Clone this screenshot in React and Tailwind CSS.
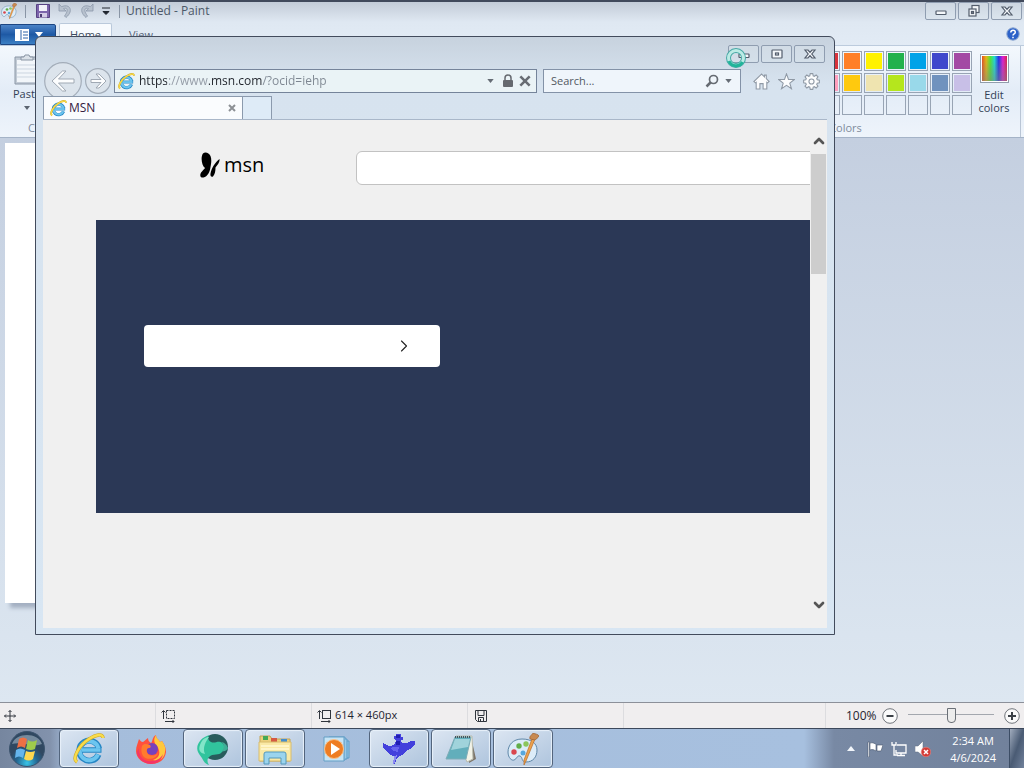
import React from 'react';
import { ChevronDown, ChevronRight, ChevronUp } from 'lucide-react';

const swatches = [
  ['#000000', '#7f7f7f', '#880015', '#d8333c', '#ff7f27', '#fff200', '#22b14c', '#00a2e8', '#3f48cc', '#a349a4'],
  ['#ffffff', '#c3c3c3', '#b97a57', '#ff9fbd', '#ffc90e', '#efe4b0', '#b5e61d', '#99d9ea', '#7092be', '#c8bfe7'],
  Array(10).fill(null),
];

function IeIcon({ className }) {
  return (
    <svg viewBox="0 0 32 32" className={className} fill="none">
      <path d="M25.5 21.5A10 10 0 1 1 26 15.5" stroke="#2586c4" strokeWidth="6" />
      <path d="M8 17H28.5" stroke="#2586c4" strokeWidth="5.5" />
      <path d="M25 21.5A9.5 9.5 0 1 1 25.5 15.5" stroke="#6cc5ef" strokeWidth="4" />
      <path d="M9 17H27.5" stroke="#6cc5ef" strokeWidth="3.5" />
      <path d="M4 29C-1 26 5 13 16 6C23 1.5 30 0 30 5" stroke="#c9a52a" strokeWidth="3.5" />
      <path d="M4 29C-1 26 5 13 16 6C23 1.5 30 0 30 5" stroke="#f9dc4a" strokeWidth="2.4" />
    </svg>
  );
}

function PaletteIcon({ className }) {
  return (
    <svg viewBox="0 0 32 32" className={className}>
      <path d="M15 6C6 6 1 12 1 19c0 6 4 9 6 8 3-1 3-5 6-4 3 1 1 6 6 6 7 0 11-5 11-12C30 10 24 6 15 6Z" fill="#dcecf8" stroke="#5f87a8" />
      <circle cx="7" cy="19" r="2.7" fill="#d9474e" />
      <circle cx="12" cy="13" r="2.7" fill="#61ad49" />
      <circle cx="19" cy="11" r="2.7" fill="#8bc65b" />
      <circle cx="16" cy="20" r="2.5" fill="#57a7dc" />
      <path d="M28 6L19 28l-2 4 0-5L25 6Z" fill="#eda24c" stroke="#b66b2a" strokeWidth="0.7" />
      <path d="M23 6C22 3 25 2 26 0c2 1 5 1 6 3-1 2-3 3-4 4Z" fill="#c88a52" stroke="#996033" strokeWidth="0.7" />
    </svg>
  );
}

function WindowIcon({ kind }) {
  return (
    <svg viewBox="0 0 16 16" className="h-4 w-4" fill="#f4f7fa" stroke="#525c6b" strokeWidth="1.2">
      {kind === 'min' && <rect x="3" y="8" width="10" height="3.5" rx="0.5" />}
      {kind === 'max' && (
        <>
          <rect x="3" y="4" width="10" height="8" rx="0.5" />
          <rect x="6.500" y="7" width="3" height="2" />
        </>
      )}
      {kind === 'restore' && (
        <>
          <rect x="6" y="2.500" width="7" height="7" />
          <rect x="3" y="6" width="7" height="7" />
          <rect x="5.500" y="8.500" width="2" height="2" />
        </>
      )}
      {kind === 'close' && <path d="M3 4H6L8 6.300 10 4H13L9.800 8 13 12H10L8 9.700 6 12H3L6.200 8Z" />}
    </svg>
  );
}

function CaptionButton({ kind, label }) {
  return (
    <button aria-label={label} className="flex h-[18px] w-[31px] items-center justify-center rounded-xs border border-[#8f9db0] bg-[#dce5ee]/40">
      <WindowIcon kind={kind} />
    </button>
  );
}

function PaintTitleBar() {
  return (
    <header className="flex h-[22px] items-start border-t-2 border-[#414a5c] bg-linear-to-b from-[#c3ccd8] to-[#dfe8f2] pr-0.5">
      <div className="flex h-[18px] items-center pl-px">
        <PaletteIcon className="h-4 w-4" />
        <span className="mx-2 h-[13px] w-px bg-[#8995a5]" />
        <button aria-label="Save" className="ml-px">
          <svg viewBox="0 0 16 16" className="h-4 w-4">
            <path d="M1.500 1.500h13v13h-13Z" fill="#7c64ab" stroke="#584384" />
            <path d="M4 2h8v6H4Z" fill="#f3f2fb" />
            <path d="M4 10h8v4.500H4Z" fill="#d4cce6" />
            <path d="M5 11h2v3H5Z" fill="#4b3a72" />
          </svg>
        </button>
        <button aria-label="Undo" className="ml-1.5">
          <svg viewBox="0 0 16 16" className="h-4 w-4">
            <path d="M2 1v7h7L6.500 5.700C10 4 12 7 7.500 13l1.500 1.500C17 8 13 0 4.500 3.700Z" fill="#b7c1ce" stroke="#8b98aa" strokeWidth="0.8" />
          </svg>
        </button>
        <button aria-label="Redo" className="ml-1.5">
          <svg viewBox="0 0 16 16" className="h-4 w-4">
            <path d="M14 1v7H7l2.500-2.300C6 4 4 7 8.500 13L7 14.500C-1 8 3 0 11.500 3.700Z" fill="#b7c1ce" stroke="#8b98aa" strokeWidth="0.8" />
          </svg>
        </button>
        <button aria-label="Customize toolbar" className="ml-1.5">
          <svg viewBox="0 0 10 10" className="h-2.5 w-2.5">
            <path d="M1 2h8M2 5.500h6L5 8.500Z" fill="#20262f" stroke="#20262f" />
          </svg>
        </button>
        <span className="mr-1.5 ml-2 h-[13px] w-px bg-[#8995a5]" />
        <h1 className="text-[12px] leading-4 text-[#4c5868]">Untitled - Paint</h1>
      </div>
      <div className="ml-auto flex gap-0.5">
        <CaptionButton kind="min" label="Minimize Paint" />
        <CaptionButton kind="restore" label="Restore Paint" />
        <CaptionButton kind="close" label="Close Paint" />
      </div>
    </header>
  );
}

function PaintTabs() {
  return (
    <nav className="flex h-[23px] items-end bg-linear-to-b from-[#dfe8f2] to-[#e2ebf5]">
      <button aria-label="Paint menu" className="flex h-[21px] w-14 items-center gap-1.5 rounded-tr-xs border border-[#1d4683] bg-linear-to-b from-[#4b83c7] via-[#1e59a5] to-[#3c80c4] pl-3.5">
        <svg viewBox="0 0 14 12" className="h-3 w-3.5">
          <path d="M0 0h14v12H0Z" fill="#fff" />
          <path d="M6 1v10M8 3h5M8 6h5M8 9h5" stroke="#2d62a8" />
        </svg>
        <svg viewBox="0 0 8 5" className="h-[5px] w-2">
          <path d="M0 0h8L4 5Z" fill="#fff" />
        </svg>
      </button>
      <button className="ml-[3px] h-[22px] w-[53px] rounded-t-xs border border-b-0 border-[#bac9db] bg-[#f8fbfe] pt-px text-[11px] leading-5 text-[#3e4c61]">Home</button>
      <button className="ml-1 h-[22px] w-[50px] pt-0.5 text-[11px] leading-5 text-[#56657a]">View</button>
      <button aria-label="Help" className="mr-1 mb-1 ml-auto">
        <svg viewBox="0 0 14 14" className="h-3.5 w-3.5">
          <circle cx="7" cy="7" r="6.200" fill="#2c62c9" stroke="#8da7cf" />
          <path d="M4.800 5.500C4.800 2.500 9.300 2.500 9.300 5.200 9.300 7 7 6.700 7 8.500M7 9.700v1.500" fill="none" stroke="#fff" strokeWidth="1.5" />
        </svg>
      </button>
    </nav>
  );
}

function Ribbon() {
  return (
    <section className="flex h-[93px] border-t border-b border-t-[#bccbdd] border-b-[#a4b3c7] bg-linear-to-b from-[#f3f8fd] via-[#e3ecf7] to-[#eef4fb]">
      <div className="flex w-24 flex-col justify-between pb-px">
        <button className="mt-2 ml-[11px] flex w-8 flex-col items-center text-[11px] leading-4 text-[#333f55]">
          <svg viewBox="0 0 28 32" className="h-8 w-7">
            <path d="M2 3h24v27H2Z" fill="#c1cad5" stroke="#8b97a6" />
            <path d="M4 6h20v22H4Z" fill="#f2f6fa" />
            <path d="M4 11h20M4 15h20M4 19h20M4 23h20" stroke="#cbd5e0" />
            <path d="M8 6V3h3l1-2h4l1 2h3v3Z" fill="#dae1e8" stroke="#8995a4" />
          </svg>
          Paste
          <svg viewBox="0 0 6 4" className="mt-1 h-1 w-1.5">
            <path d="M0 0h6L3 4Z" fill="#5b6470" />
          </svg>
        </button>
        <span className="pl-7 text-[11px] leading-4 text-[#7f8b9c]">Clipboard</span>
      </div>
      <div className="mr-[3px] ml-auto flex w-[350px] flex-col justify-between border-r border-[#b9c5d5] pb-px">
        <div className="mt-[5px] flex justify-end gap-1 pr-2">
          <div className="flex flex-col gap-0.5">
            {swatches.map((row, r) => (
              <div key={r} className="flex gap-0.5">
                {row.map((color, i) => (
                  <button
                    key={i}
                    aria-label={`Color ${r * 10 + i + 1}`}
                    className="h-5 w-5 border border-[#98a4b4] p-px"
                  >
                    {color && <span className="block h-full" style={{ backgroundColor: color }} />}
                  </button>
                ))}
              </div>
            ))}
          </div>
          <button className="flex w-9 flex-col items-center pt-[3px] text-[11px] leading-[13px] text-[#333f55]">
            <span className="mb-[5px] h-[29px] w-[29px] border border-[#919dac] bg-white p-px">
              <span className="block h-full bg-[linear-gradient(to_bottom,transparent,#8080808c),linear-gradient(to_right,#e8501d,#e8b712,#4ee835,#1ddbd4,#2030e8,#e31cd4,#d8204c)]" />
            </span>
            Edit
            <span>colors</span>
          </button>
        </div>
        <span className="text-center text-[11px] leading-4 text-[#7f8b9c]">Colors</span>
      </div>
    </section>
  );
}

function StatusBar() {
  return (
    <footer className="flex h-[26px] items-center border-t border-[#8c9099] bg-[#f0eeef] text-[11px] text-[#1f2430]">
      <div className="flex h-full w-[156px] items-center border-r border-[#dcdcdf] pl-1">
        <svg viewBox="0 0 12 12" className="h-3 w-3" stroke="#30353d" fill="none">
          <path d="M6 .5v11M.5 6h11M4.500 2 6 .5 7.500 2M4.500 10 6 11.500 7.500 10M2 4.500.5 6 2 7.500M10 4.500 11.500 6 10 7.500" />
        </svg>
      </div>
      <div className="flex h-full w-[156px] items-center border-r border-[#dcdcdf] pl-[5px]">
        <svg viewBox="0 0 14 14" className="h-3.5 w-3.5" stroke="#30353d" fill="none">
          <path d="M2.500 10V2M.5 3.500l2-2 2 2M4 12.500h9M11.500 11l1.500 1.500-1.500 1.500" />
          <rect x="5.500" y="1.500" width="8" height="8" strokeDasharray="2 1" />
        </svg>
      </div>
      <div className="flex h-full w-[156px] items-center gap-1 border-r border-[#dcdcdf] pl-[5px]">
        <svg viewBox="0 0 14 14" className="h-3.5 w-3.5" stroke="#30353d" fill="none">
          <path d="M2.500 10V2M.5 3.500l2-2 2 2M4 12.500h9M11.500 11l1.500 1.500-1.500 1.500" />
          <rect x="5.500" y="1.500" width="8" height="8" />
        </svg>
        614 × 460px
      </div>
      <div className="flex h-full w-[156px] items-center border-r border-[#dcdcdf] pl-[7px]">
        <svg viewBox="0 0 12 12" className="h-3 w-3" stroke="#30353d" fill="none">
          <path d="M.5.5h11v11h-9l-2-2ZM3 .5v5h6v-5M3.500 11.500v-4h5v4M5.500 9v2" />
        </svg>
      </div>
      <div className="ml-auto flex h-full items-center border-l border-[#dcdcdf] pr-1 pl-5">
        <label htmlFor="zoom" className="w-[36px] text-[12px]">100%</label>
        <button aria-label="Zoom out">
          <svg viewBox="0 0 16 16" className="h-4 w-4" fill="#fafafa" stroke="#71757b">
            <circle cx="8" cy="8" r="7.300" />
            <path d="M4.500 8h7" stroke="#3b4046" strokeWidth="2" />
          </svg>
        </button>
        <input
          id="zoom"
          type="range"
          defaultValue="50"
          className="mx-2.5 h-4 w-[86px] appearance-none bg-[linear-gradient(#a3a7ae,#a3a7ae)] bg-[length:100%_1px] bg-[position:0_6px] bg-no-repeat [&::-webkit-slider-thumb]:h-[15px] [&::-webkit-slider-thumb]:w-[9px] [&::-webkit-slider-thumb]:appearance-none [&::-webkit-slider-thumb]:rounded-b-sm [&::-webkit-slider-thumb]:border [&::-webkit-slider-thumb]:border-[#6b7077] [&::-webkit-slider-thumb]:bg-[#ececec]"
        />
        <button aria-label="Zoom in">
          <svg viewBox="0 0 16 16" className="h-4 w-4" fill="#fafafa" stroke="#71757b">
            <circle cx="8" cy="8" r="7.300" />
            <path d="M4 8h8M8 4v8" stroke="#3b4046" strokeWidth="2" />
          </svg>
        </button>
      </div>
    </footer>
  );
}

function BrowserNav() {
  return (
    <div className="flex h-[30px] items-center pl-px">
      <button aria-label="Back" className="shrink-0">
        <svg viewBox="0 0 38 38" className="h-[38px] w-[38px]">
          <circle cx="19" cy="19" r="18.300" fill="#dce4ec" stroke="#a3adb9" strokeWidth="1.2" />
          <path d="M8 19 18.500 9H22L14.500 17H30v4H14.500L22 29H18.500Z" fill="#fcfdfe" stroke="#a0a9b4" strokeLinejoin="round" />
        </svg>
      </button>
      <button aria-label="Forward" className="mr-[3px] ml-[3px] shrink-0">
        <svg viewBox="0 0 26 26" className="h-[26px] w-[26px]">
          <circle cx="13" cy="13" r="12.400" fill="#dce4ec" stroke="#a3adb9" strokeWidth="1.2" />
          <path d="M21 13 14 6h-3l5 5.500H6v3h10L11 20h3Z" fill="#fcfdfe" stroke="#a0a9b4" strokeLinejoin="round" />
        </svg>
      </button>
      <div className="flex h-6 min-w-0 flex-1 items-center border border-[#75849a] bg-[#eaf3f6] pr-1 pl-[3px]">
        <IeIcon className="h-[17px] w-[17px] shrink-0" />
        <input
          aria-label="Address"
          defaultValue="https://www.msn.com/?ocid=iehp"
          className="ml-1 min-w-0 flex-1 bg-[linear-gradient(to_right,#1f242b_28px,#929aa5_28px,#929aa5_70px,#1f242b_70px,#1f242b_123px,#7d8691_123px)] bg-clip-text text-[12px] leading-5 text-transparent outline-none"
        />
        <button aria-label="Address history" className="mr-2">
          <svg viewBox="0 0 8 5" className="h-1 w-[7px]"><path d="M0 0h8L4 5Z" fill="#656c75" /></svg>
        </button>
        <svg viewBox="0 0 12 14" className="mr-1 h-3.5 w-3">
          <path d="M3 7V4a3 3 0 0 1 6 0v3" fill="none" stroke="#65696f" strokeWidth="1.5" />
          <rect x="1" y="6" width="10" height="7" rx="1" fill="#65696f" />
        </svg>
        <button aria-label="Stop">
          <svg viewBox="0 0 12 12" className="h-3.5 w-3.5"><path d="m2 2 8 8M10 2l-8 8" stroke="#686d73" strokeWidth="2.2" /></svg>
        </button>
      </div>
      <div className="ml-1.5 flex h-6 w-[198px] items-center border border-[#8392a7] bg-[#eff5fb] pr-2 pl-[7px]">
        <input aria-label="Search" placeholder="Search..." className="min-w-0 flex-1 text-[11px] leading-5 outline-none placeholder:text-[#525962]" />
        <button aria-label="Go" className="mr-1.5">
          <svg viewBox="0 0 14 14" className="h-3.5 w-3.5" fill="none" stroke="#666b72">
            <circle cx="8.500" cy="5.500" r="4" strokeWidth="1.7" />
            <path d="m5.500 8.500-4 4" strokeWidth="2.5" />
          </svg>
        </button>
        <svg viewBox="0 0 8 5" className="h-1 w-[7px]"><path d="M0 0h8L4 5Z" fill="#656c75" /></svg>
      </div>
      <div className="ml-3 flex w-[74px] gap-2">
        <button aria-label="Home page">
          <svg viewBox="0 0 16 16" className="h-[17px] w-[17px]" fill="#fbfcfd" stroke="#8f99a5">
            <path d="M8 1 .8 8l1.500 1.300.7-.5V15h3.500v-5h3v5H13V8.800l.7.5L15.200 8 12.500 5.300V2h-1.700v1.600Z" />
          </svg>
        </button>
        <button aria-label="Favorites">
          <svg viewBox="0 0 16 16" className="h-[17px] w-[17px]" fill="#fbfcfd" stroke="#8f99a5">
            <path d="m8 .8 1.900 5.200 5.500.1-4.300 3.400 1.600 5.300L8 11.700l-4.700 3.100 1.600-5.300L.6 6.100 6.100 6Z" />
          </svg>
        </button>
        <button aria-label="Tools">
          <svg viewBox="0 0 16 16" className="h-[17px] w-[17px]" fill="#fbfcfd" stroke="#8f99a5">
            <path d="M6.800.6h2.400l.4 2 1.100.5 1.700-1.200 1.700 1.700-1.200 1.700.5 1.100 2 .4v2.400l-2 .4-.5 1.100 1.200 1.700-1.700 1.700-1.700-1.200-1.100.5-.4 2H6.800l-.4-2-1.100-.5-1.700 1.200-1.700-1.700 1.200-1.700-.5-1.100-2-.4V6.800l2-.4.5-1.100-1.200-1.700 1.700-1.700 1.700 1.200 1.100-.5Z" />
            <circle cx="8" cy="8" r="2.400" />
          </svg>
        </button>
      </div>
    </div>
  );
}

function MsnPage() {
  return (
    <main className="flex min-h-0 flex-1 bg-[#f0f0f0]">
      <div className="min-w-0 flex-1 overflow-hidden">
        <div className="flex h-[100px] items-start pt-[31px]">
          <a href="#msn" className="ml-[157px] flex w-[156px] shrink-0 items-center gap-1 text-[20px] leading-7 text-black">
            <svg viewBox="0 0 20 26" className="h-7 w-5" fill="#000">
              <path d="M3 1.500C5-.5 9 .5 10.500 4c1.500 4 .5 8 0 11-.5 5-3 9.500-7 10.500-4 .5-4-3.500-1.500-6 1-1.500 2.500-2.500 3-3.500C1.500 13 .5 5 3 1.500Z" />
              <path d="M19.500 7c.5 3-2 6-4 8.500 0 3.500-.5 6.500-2.500 9-1.500 1-3-.5-2.500-3C11.500 16 15.500 10 19.500 7Z" />
            </svg>
            msn
          </a>
          <input aria-label="Search the web" className="h-[34px] w-full shrink-0 rounded-md border border-[#c2c2c2] bg-white" />
        </div>
        <section className="ml-[53px] h-[293px] bg-[#2b3856] pt-[105px] pl-12">
          <button aria-label="Next" className="flex h-[42px] w-[296px] items-center justify-end rounded-sm bg-white pr-[26px]">
            <ChevronRight className="h-5 w-5 text-[#222]" strokeWidth={1.3} />
          </button>
        </section>
      </div>
      <div className="flex w-[17px] flex-col items-center justify-between pt-[13px] pb-[15px]">
        <div className="flex w-full flex-col items-center">
          <ChevronUp className="h-4 w-4 text-[#555]" strokeWidth={4} />
          <div className="mt-[5px] h-[120px] w-[15px] bg-[#cdcdcd]" />
        </div>
        <ChevronDown className="h-4 w-4 text-[#555]" strokeWidth={4} />
      </div>
    </main>
  );
}

function BrowserWindow() {
  return (
    <section
      aria-label="MSN"
      className="absolute top-9 right-[189px] bottom-[133px] left-[35px] flex flex-col rounded-t-md border border-[#424b5c] bg-linear-to-b from-[#c7d2de] via-[#d7e3ef] via-8% to-[#d8e6f3] px-[7px] pb-1.5"
    >
      <div className="flex h-[29px] justify-end gap-0.5 pt-2 pr-0.5">
        <CaptionButton kind="min" label="Minimize" />
        <CaptionButton kind="max" label="Maximize" />
        <CaptionButton kind="close" label="Close" />
      </div>
      <BrowserNav />
      <div className="relative flex h-6 border-b border-[#a9b7c9]">
        <div className="flex w-[200px] items-center border border-b-0 border-[#8b9aad] bg-[#fafcfe] px-1.5">
          <IeIcon className="h-[17px] w-[17px]" />
          <span className="ml-0.5 text-[12px] text-[#33203f]">MSN</span>
          <button aria-label="Close tab" className="ml-auto">
            <svg viewBox="0 0 8 8" className="h-2 w-2"><path d="m1 1 6 6M7 1 1 7" stroke="#8c9095" strokeWidth="2" /></svg>
          </button>
        </div>
        <button aria-label="New tab" className="w-[29px] border border-b-0 border-l-0 border-[#8b9aad] bg-[#deebf7]" />
      </div>
      <MsnPage />
      <svg viewBox="0 0 22 22" className="absolute top-[10px] right-[87px] h-[22px] w-[22px]" fill="none">
        <circle cx="11" cy="11" r="7.500" stroke="#47a8a5" strokeWidth="5" />
        <circle cx="11" cy="11" r="7.500" stroke="#bcebe5" strokeWidth="3" />
        <path d="M4 14a7.500 7.500 0 0 0 13.500 1" stroke="#21b49a" strokeWidth="3" />
      </svg>
    </section>
  );
}

const apps = [
  {
    name: 'Internet Explorer',
    open: true,
    icon: <IeIcon className="h-8 w-8" />,
  },
  {
    name: 'Firefox',
    open: false,
    icon: (
      <svg viewBox="0 0 32 32" className="h-8 w-8">
        <path d="M4 6c1 1 2 3 4 3 2-1 3-3 5-4 0 2 1 4 3 5 2-2 1-6 5-8 0 4 3 4 4 7l2-1c3 4 4 8 4 11-1 8-7 12-15 12S1 25 1 18C1 13 3 10 4 6Z" fill="#ff503d" />
        <path d="M21 2c0 4 3 4 4 7l2-1c3 4 4 8 3 11-1 8-8 10-12 8 7-2 8-8 4-14-4-4-3-8-1-11Z" fill="#ffc83c" />
        <path d="M4 15c-1 9 6 14 12 13 6 0 10-3 12-7-1 6-6 10-12 10S2 26 2 19Z" fill="#f43567" />
        <circle cx="17" cy="16" r="6" fill="#7641bd" />
        <path d="M7 13c2-3 5-2 8-1 1 1 1 3-1 3-3 0-3 5 0 7 3 1 6 1 9-2-1 6-11 8-15 3-2-3-2-7-1-10Z" fill="#ff7b2e" />
      </svg>
    ),
  },
  {
    name: 'Network browser',
    open: true,
    icon: (
      <svg viewBox="0 0 32 32" className="h-8 w-8">
        <circle cx="18" cy="14" r="13" fill="#285c5c" />
        <path d="M13 2C4 4-2 12 1 19c1 3 4 5 5 8 1 2 3 4 6 5-2-3-2-6 0-8 4-4 10-1 13-5 3-3 3-7 0-9-4-3-7 1-11-1-3-2-4-5-1-7Z" fill="#31c49d" />
        <path d="M24 9c3 2 4 5 1 9 3 1 5-1 6-3-1-3-4-6-7-6Z" fill="#3fae97" />
        <path d="M3 12C5 6 9 4 12 4 9 8 5 15 8 21 3 20 1 17 3 12Z" fill="#82e5c8" />
      </svg>
    ),
  },
  {
    name: 'Windows Explorer',
    open: true,
    icon: (
      <svg viewBox="0 0 34 32" className="h-8 w-[34px]">
        <path d="M2 8V3h10l2 3h18v22H2Z" fill="#ecd07c" stroke="#c2a255" />
        <path d="M5 3h5v4H5Z" fill="#43a956" />
        <path d="M13 5h6v4h-6Z" fill="#d55843" />
        <path d="M23 6h6v4h-6Z" fill="#438dcd" />
        <path d="M1 9h32v19H1Z" fill="#fae9a5" stroke="#d8bc6d" />
        <path d="M3 13h28M3 16h28" stroke="#fff5c8" strokeWidth="2" />
        <path d="M6 31V21q0-2 2-2h18q2 0 2 2v10h-5v-6H11v6Z" fill="#9bd4ee" stroke="#5598bb" />
      </svg>
    ),
  },
  {
    name: 'Media Player',
    open: false,
    icon: (
      <svg viewBox="0 0 28 26" className="h-[26px] w-7">
        <path d="M6 1h16v23H6Z" fill="#bddff4" stroke="#5b9bc7" />
        <path d="M22 3h2v20h-2M24 5h2v17h-2" fill="#98c9e8" stroke="#5b9bc7" />
        <path d="M1 1h20v24H1Z" fill="#c6e4f5" stroke="#649fc5" />
        <circle cx="11" cy="13" r="9.500" fill="#ee7d23" stroke="#f8c28d" />
        <path d="m8 7 9 6-9 6Z" fill="#fff" />
      </svg>
    ),
  },
  {
    name: 'Bird',
    open: true,
    icon: (
      <svg viewBox="0 0 32 32" className="h-8 w-8" shapeRendering="crispEdges">
        <path d="M11 3h2V1h5v3h2v3h-2l1 3h4l3-1 2-1h4v3l-3 3-2 2-3 1-3 3-2 2-3 1-2 2-1 3-1 3h-2l1-5v-3l-4-1-3-4-3-2-2-3V9l3 2 4 2 5-1 2-4-1-2h-1Z" fill="#4340dc" />
        <path d="M13 2h4v3h-4ZM13 8h4v4h-4Z" fill="#211fb2" />
        <path d="M11 14h5l-1 5-4-1-4-3Z" fill="#6764ee" />
        <path d="m11 23 3-1-1 4-2 5h-1Z" fill="#8a89f0" />
      </svg>
    ),
  },
  {
    name: 'Notepad',
    open: true,
    icon: (
      <svg viewBox="0 0 32 32" className="h-8 w-8">
        <path d="m26 4 5 22-7 4Z" fill="#7c7468" />
        <path d="M11 3h16l1 23-6 3Z" fill="#f3f3e7" stroke="#b8bbae" />
        <path d="M10 4h16l-5 22H1Z" fill="#62aebb" stroke="#7eacb6" />
        <path d="M10 6h15l-2 8-17 3Z" fill="#a0d3db" />
        <path d="M10 4h16" stroke="#48545b" strokeWidth="2" strokeDasharray="1 1" />
      </svg>
    ),
  },
  { name: 'Paint', open: true, icon: <PaletteIcon className="h-8 w-8" /> },
];

function Taskbar() {
  return (
    <footer className="flex h-10 items-stretch border-t border-[#3c485b] bg-[linear-gradient(to_right,#76869f,#8292ac_50px,#a5bddb_70px,#a7c0df_calc(100%_-_220px),#7889a4_calc(100%_-_190px),#71819b)]">
      <button aria-label="Start" className="flex w-[59px] items-center pl-2">
        <svg viewBox="0 0 38 38" className="h-[38px] w-[38px]">
          <defs>
            <radialGradient id="orb" cy="0.9">
              <stop offset="0" stopColor="#38c4e8" />
              <stop offset="0.6" stopColor="#246691" />
              <stop offset="1" stopColor="#304861" />
            </radialGradient>
          </defs>
          <circle cx="19" cy="19" r="17.500" fill="url(#orb)" stroke="#3b536d" />
          <path d="M4 14C8 2 30 2 34 14 24 18 14 11 4 14Z" fill="#b9cbd9" opacity="0.5" />
          <path d="M11 9q4-3 8 0l-2 9q-4-3-8 0Z" fill="#ee7044" />
          <path d="M20 10q4 3 9 0l-2 9q-4 2-9 0Z" fill="#9fcb4c" />
          <path d="M8 20q4-3 9 0l-2 8q-4-3-8 0Z" fill="#65b5ec" />
          <path d="M18 21q4 2 9 0l-2 8q-4 3-9 0Z" fill="#fed74f" />
        </svg>
      </button>
      <div className="flex gap-0.5">
        {apps.map((app) => (
          <button
            key={app.name}
            aria-label={app.name}
            className={`flex w-[60px] items-center justify-center rounded-sm ${app.open ? 'border border-[#53657d] bg-linear-to-br from-[#dce6f2] to-[#aec4dd] inset-shadow-[0_0_1px_1px_#e8f1fa]' : ''}`}
          >
            {app.icon}
          </button>
        ))}
      </div>
      <div className="ml-auto flex items-center">
        <button aria-label="Show hidden icons" className="mr-3">
          <svg viewBox="0 0 8 5" className="h-[5px] w-2"><path d="m0 5 4-5 4 5Z" fill="#f2f6fb" /></svg>
        </button>
        <svg viewBox="0 0 16 16" className="mr-2 h-4 w-4" fill="#fff" stroke="#46566d" strokeWidth="0.6">
          <path d="M1 1h1.500v15H1ZM3 2c3-1 5 1 6 1v7c-2-1-3-2-6-1ZM10 4h6l-2 6h-4Z" />
        </svg>
        <svg viewBox="0 0 16 16" className="mr-2 h-4 w-4" fill="none" stroke="#fff" strokeWidth="1.3">
          <path d="M6 4h9v8H5V9M10 12v2M6 14.500h8M1 1v3h4V1M3 4v10h4" />
        </svg>
        <svg viewBox="0 0 16 16" className="mr-[19px] h-4 w-4">
          <path d="M0 5h3l5-5v15l-5-4H0Z" fill="#fff" stroke="#5d6a7d" strokeWidth="0.5" />
          <circle cx="11" cy="11" r="4.800" fill="#d43b36" stroke="#e58b86" strokeWidth="0.6" />
          <path d="m9 9 4 4M13 9l-4 4" stroke="#fff" strokeWidth="1.5" />
        </svg>
        <time className="mr-[13px] text-center text-[11px] leading-[17px] text-white">
          2:34 AM
          <br />
          4/6/2024
        </time>
        <button aria-label="Show desktop" className="h-full w-[15px] border-l border-[#3c4d65] bg-linear-to-br from-[#a2adbe] via-[#4a5b74] to-[#72829c]" />
      </div>
    </footer>
  );
}

export default function App() {
  return (
    <div className="relative flex h-screen flex-col overflow-hidden font-['Open_Sans','Noto_Sans',sans-serif]">
      <PaintTitleBar />
      <PaintTabs />
      <Ribbon />
      <div className="min-h-0 flex-1 bg-linear-to-b from-[#c4cfe0] to-[#dde7f1] pt-[5px] pl-[5px]">
        <div className="h-[460px] w-[614px] bg-white shadow-[5px_5px_4px_#a4b0c2]" />
      </div>
      <StatusBar />
      <Taskbar />
      <BrowserWindow />
    </div>
  );
}
